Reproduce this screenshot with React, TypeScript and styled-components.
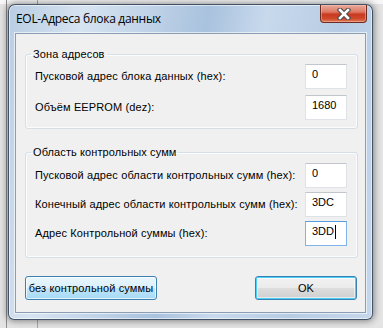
import React from "react";
import styled, { createGlobalStyle } from "styled-components";

const GlobalStyle = createGlobalStyle`
  html, body {
    margin: 0;
    padding: 0;
  }
  body {
    width: 383px;
    height: 328px;
    overflow: hidden;
    font-family: "Liberation Sans", Arial, sans-serif;
  }
`;

const Desktop = styled.div`
  width: 383px;
  height: 328px;
  box-sizing: border-box;
  padding: 4px 0 0 8px;
  background-color: #ececec;
  background-image: linear-gradient(
      90deg,
      transparent 6px,
      #8e8e8e 6px,
      #8e8e8e 7px,
      transparent 7px
    ),
    linear-gradient(
      90deg,
      transparent 37px,
      #a9a9a9 37px,
      #a9a9a9 38px,
      transparent 38px
    ),
    linear-gradient(180deg, #f7f7f7 0, #f7f7f7 4px, #e4e4e4 4px);
`;

const Window = styled.div`
  width: 365px;
  height: 316px;
  box-sizing: border-box;
  display: flex;
  flex-direction: column;
  padding: 0 6px 6px 6px;
  border: 1px solid rgba(35, 50, 70, 0.8);
  border-radius: 7px 7px 6px 6px;
  background: linear-gradient(
      100deg,
      #b9cde3 0%,
      #d6e3f1 18%,
      #c3d5e9 32%,
      #a9c2de 48%,
      #c8d9ec 62%,
      #b7cce4 80%,
      #c6d7ea 100%
    );
  box-shadow: 0 0 7px 1px rgba(0, 0, 0, 0.45),
    inset 0 0 0 1px rgba(255, 255, 255, 0.55);
`;

const TitleBar = styled.div`
  height: 28px;
  display: flex;
  align-items: flex-start;
  justify-content: space-between;
`;

const Title = styled.div`
  padding: 6px 0 0 1px;
  font-family: "Open Sans", "Noto Sans", sans-serif;
  font-size: 12px;
  line-height: 16px;
  color: #000;
  letter-spacing: -0.3px;
`;

const CloseButton = styled.div`
  width: 47px;
  height: 18px;
  margin-right: -1px;
  box-sizing: border-box;
  display: flex;
  align-items: center;
  justify-content: center;
  border: 1px solid #6b2c22;
  border-top: none;
  border-radius: 0 0 4px 4px;
  background: linear-gradient(
    180deg,
    #e9a99a 0%,
    #dd7b66 40%,
    #c8391f 55%,
    #cf4a2c 80%,
    #e07a55 100%
  );
  box-shadow: inset 0 0 0 1px rgba(255, 200, 190, 0.45);
`;

const Client = styled.div`
  flex: 1;
  box-sizing: border-box;
  display: flex;
  flex-direction: column;
  padding: 0 7px 0 9px;
  background: #f0f0f0;
  border: 1px solid #8a9db3;
  box-shadow: 0 0 0 1px rgba(255, 255, 255, 0.6);
`;

const GroupBox = styled.fieldset<{ $top: number; $pt: number; $pb: number; $gap: number }>`
  margin: ${(p) => p.$top}px 0 0 0;
  padding: ${(p) => p.$pt}px 10px ${(p) => p.$pb}px 9px;
  border: 1px solid #d5dfe5;
  border-radius: 3px;
  box-shadow: inset 0 0 0 1px #fbfcfd;
  display: flex;
  flex-direction: column;
  gap: ${(p) => p.$gap}px;
`;

const Legend = styled.legend`
  margin-left: -4px;
  padding: 0 2px;
  font-size: 11px;
  line-height: 13px;
  letter-spacing: 0.1px;
  color: #000;
`;

const Row = styled.div`
  display: flex;
  align-items: center;
  justify-content: space-between;
`;

const Label = styled.span`
  font-size: 11px;
  line-height: 13px;
  letter-spacing: 0.13px;
  color: #000;
`;

const TextBox = styled.div<{ $focused?: boolean }>`
  width: 42px;
  height: 25px;
  box-sizing: border-box;
  padding: 3px 0 0 6px;
  background: #fff;
  border: 1px solid ${(p) => (p.$focused ? "#7eb4ea" : "#dfe3e8")};
  border-top-color: ${(p) => (p.$focused ? "#569de5" : "#c2c6cc")};
  font-size: 11px;
  line-height: 13px;
  color: #000;
  display: flex;
  align-items: flex-start;
`;

const Caret = styled.span`
  width: 1px;
  height: 14px;
  margin-left: 1px;
  background: #000;
`;

const ButtonRow = styled.div`
  margin-top: 18px;
  padding-right: 1px;
  display: flex;
  justify-content: space-between;
`;

const Button = styled.div<{ $width: number; $variant: "hot" | "default" }>`
  width: ${(p) => p.$width}px;
  height: 24px;
  box-sizing: border-box;
  display: flex;
  align-items: center;
  justify-content: center;
  border-radius: 3px;
  font-size: 11px;
  letter-spacing: 0.13px;
  color: #000;
  border: 1px solid #3c7fb1;
  background: ${(p) =>
    p.$variant === "hot"
      ? "linear-gradient(180deg, #eaf6fd 0%, #d9f0fc 50%, #bee6fd 50%, #a7d9f5 100%)"
      : "linear-gradient(180deg, #f2f2f2 0%, #ebebeb 50%, #dddddd 50%, #cfcfcf 100%)"};
  box-shadow: ${(p) =>
    p.$variant === "hot"
      ? "inset 0 0 0 1px rgba(255,255,255,0.7)"
      : "inset 0 0 0 1px #48d2fb, inset 0 0 0 2px rgba(255,255,255,0.5)"};
`;

const CloseGlyph = () => (
  <svg width="14" height="12" viewBox="0 0 14 12">
    <path
      d="M3 2 L11 10 M11 2 L3 10"
      stroke="#4a4a4a"
      strokeWidth="4.6"
      strokeLinecap="square"
    />
    <path
      d="M3 2 L11 10 M11 2 L3 10"
      stroke="#ffffff"
      strokeWidth="2.6"
      strokeLinecap="square"
    />
  </svg>
);

export default function App() {
  return (
    <>
      <GlobalStyle />
      <Desktop>
        <Window>
          <TitleBar>
            <Title>EOL-Адреса блока данных</Title>
            <CloseButton>
              <CloseGlyph />
            </CloseButton>
          </TitleBar>
          <Client>
            <GroupBox $top={14} $pt={3} $pb={8} $gap={6}>
              <Legend>Зона адресов</Legend>
              <Row>
                <Label>Пусковой адрес блока данных (hex):</Label>
                <TextBox>0</TextBox>
              </Row>
              <Row>
                <Label>Объём EEPROM (dez):</Label>
                <TextBox>1680</TextBox>
              </Row>
            </GroupBox>
            <GroupBox $top={17} $pt={4} $pb={11} $gap={4}>
              <Legend>Область контрольных сумм</Legend>
              <Row>
                <Label>Пусковой адрес области контрольных сумм (hex):</Label>
                <TextBox>0</TextBox>
              </Row>
              <Row>
                <Label>Конечный адрес области контрольных сумм (hex):</Label>
                <TextBox>3DC</TextBox>
              </Row>
              <Row>
                <Label>Адрес Контрольной суммы (hex):</Label>
                <TextBox $focused>
                  3DD
                  <Caret />
                </TextBox>
              </Row>
            </GroupBox>
            <ButtonRow>
              <Button $width={132} $variant="hot">
                без контрольной суммы
              </Button>
              <Button $width={102} $variant="default">
                OK
              </Button>
            </ButtonRow>
          </Client>
        </Window>
      </Desktop>
    </>
  );
}
